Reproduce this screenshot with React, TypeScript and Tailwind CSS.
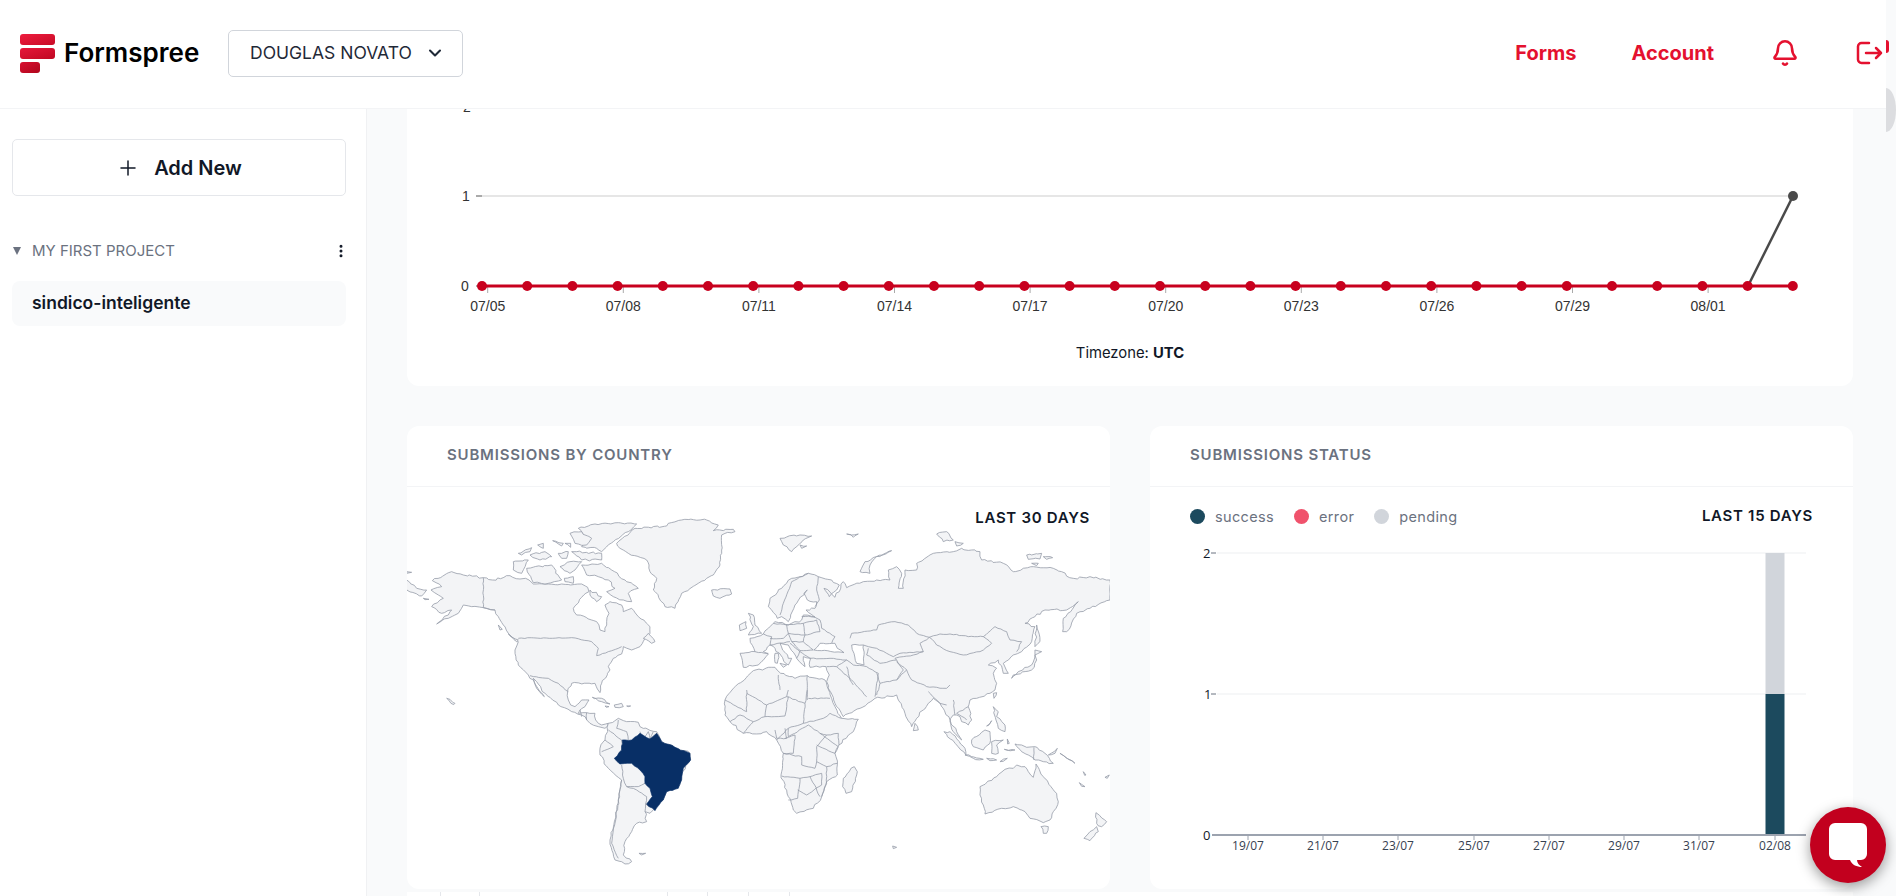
import React from "react";
import { Bell, ChevronDown, MoreVertical, Plus } from "lucide-react";

const frameA: string[] = [
  "82,212 140,185 175,195 235,203 262,210 315,197 345,207 362,205 372,210 385,222 430,222 470,222 497,225 530,222 548,232 552,245 530,262 505,295 515,315 575,335 585,360 600,365 605,335 612,310 600,285 615,275 650,285 655,305 680,295 700,320 735,350 735,370 720,385 705,410 680,420 655,410 650,432 625,445 610,470 615,480 590,520 585,548 570,520 500,520 488,545 490,570 497,585 510,590 530,570 552,570 540,590 525,600 520,610 545,608 570,610 572,630 590,645 610,640 600,655 580,650 555,640 530,615 500,605 460,585 420,550 395,515 385,505 395,535 418,560 405,545 385,510 370,495 340,465 330,420 340,395 310,370 295,345 280,320 270,300 235,293 200,290 175,285 160,310 130,325 95,342 130,315 140,300 110,310 80,290 115,265 100,255 78,240 110,230",
  "530,165 590,160 620,180 660,210 700,235 670,250 680,275 655,270 625,260 605,245 630,235 610,210 580,200 545,195",
  "520,55 570,42 640,38 695,42 670,65 625,95 590,125 575,115 530,110 555,90",
  "495,70 530,65 560,85 545,105 510,100",
  "325,155 370,150 350,190 325,180",
  "365,175 440,165 470,210 420,222 385,218",
  "340,130 380,113 375,125 350,135",
  "375,135 420,125 440,140 405,150",
  "398,105 415,100 415,115",
  "443,92 475,100 470,108",
  "480,100 497,100 497,112",
  "460,130 490,125 485,145 470,145",
  "500,125 515,125 590,130 590,150 530,150",
  "495,155 530,155 510,180 495,190 465,170",
  "478,205 505,200 505,220 480,215",
  "555,240 590,260 575,275 555,255",
  "715,385 730,370 750,395 740,400",
  "310,372 340,390 335,395",
  "280,345 292,358 285,360",
  "5,210 35,235 65,240 50,258 5,240",
  "5,185 20,187 5,190",
  "55,265 72,268 60,269",
  "920,240 975,237 980,252 945,265 925,258",
  "635,100 690,55 785,48 790,40 830,30 905,30 940,45 925,62 985,58 990,65 950,75 950,120 945,165 925,195 880,220 830,250 810,295 780,290 745,240 755,205 735,185 725,150 670,130 645,115",
  "562,562 590,565 615,582 590,575",
  "628,585 650,580 655,590 630,592",
  "665,588 677,588 670,590",
  "600,588 612,590 604,592",
  "125,565 150,580 146,584",
  "610,640 640,625 665,635 700,637 705,650 755,665 770,695 855,730 855,750 830,790 825,825 790,840 750,895 735,910 720,905 725,935 695,940 680,965 660,995 655,1035 680,1055 660,1062 630,1050 615,990 630,940 640,870 650,810 610,775 585,735 585,715 600,690 608,665",
  "702,1030 722,1030 710,1035",
];

const bordersA: string[] = [
  "235,203 235,293 270,300",
  "340,385 500,383 560,395 580,415 575,437 610,425 650,410",
  "375,497 430,505 460,520 490,545",
  "525,600 530,620",
  "545,608 545,630",
  "610,660 650,690 650,720",
  "640,630 635,655 665,665 670,690",
  "705,665 715,685 730,665 735,687 745,665",
  "600,690 625,710 590,725",
  "650,765 655,805",
  "655,805 665,830 700,830 720,820",
  "650,810 640,870 625,960 620,1000 640,1045",
  "665,830 695,840 725,860 722,882 720,905",
  "722,882 745,895",
];

const brazil =
  "652,690 680,690 705,670 735,687 755,670 770,695 810,712 855,730 857,750 835,775 830,810 820,835 785,845 775,870 750,902 725,882 742,860 735,835 720,820 720,800 705,780 680,760 645,762 628,745 650,720";

const frameB: string[] = [
  "15,570 40,535 62,518 100,482 165,472 182,490 225,505 262,497 315,510 335,565 345,590 365,625 415,628 400,665 357,705 345,730 352,765 352,795 320,815 305,860 280,895 230,910 220,900 205,860 183,795 190,730 170,690 140,665 110,672 70,670 30,635 15,615",
  "145,432 115,465 70,472 60,430 105,425 90,385 130,372 165,335 205,345 245,330 250,315 285,322 258,300 285,295 290,275 262,270 252,250 262,240 225,285 205,335 185,320 172,325 145,290 150,265 185,235 215,205 265,190 295,200 335,210 358,225 350,240 328,260 312,235 345,262 370,215 380,233 430,215 470,210 510,210 505,180 530,170 545,190 535,235 550,235 555,180 590,180 590,160 640,130 700,125 725,115 780,125 785,150 850,160 880,185 940,170 1000,175 1060,205 1110,200 1170,210 1170,270 1110,295 1070,310 1040,365 1028,365 1030,325 1075,275 1040,300 975,300 915,340 945,350 935,395 905,425 880,435 850,460 865,490 850,490 835,450 805,465 830,475 820,490 830,520 825,540 810,550 770,565 750,570 745,590 755,630 745,645 725,635 720,620 700,615 690,635 710,665 725,690 700,665 690,630 660,580 640,565 625,580 590,625 575,650 555,610 530,555 465,565 420,595 370,620 345,580 320,515 328,495 318,470 270,472 272,445 250,440 255,470 230,445 205,405 180,400 205,445 215,445 205,465 165,415 150,405 130,425",
  "180,460 200,465 190,472",
  "165,430 175,430 172,460 165,458",
  "85,310 100,315 105,345 125,370 85,375 100,350",
  "58,345 78,335 80,355 60,362",
  "180,85 240,75 275,78 250,90 215,125 190,105",
  "240,105 260,108 245,115",
  "380,72 415,72 400,82",
  "420,185 435,155 515,122 470,140 450,165 450,190",
  "650,72 680,65 700,90 670,95",
  "705,95 730,100 710,108",
  "920,135 965,130 960,147 925,148",
  "970,140 998,143 980,148",
  "935,160 955,160 950,167",
  "950,345 960,395 945,410",
  "945,420 965,425 945,435",
  "875,505 895,485 935,465 945,435 950,450 935,480 880,495",
];

const holes: string[] = [
  "282,420 300,400 345,400 352,415 372,428 305,422",
  "395,405 430,405 432,465 410,460 402,430",
];

const bordersB: string[] = [
  "295,200 290,240 298,270 285,290",
  "265,190 215,215 190,280 180,315",
  "285,322 300,330 305,355 345,380 335,400",
  "390,385 395,370 470,360 475,345 525,335 565,345 590,370 628,382 660,372 690,372 745,380 790,380 825,350 860,365 870,390 905,395 890,425",
  "628,382 650,405 690,425 730,435 780,425 815,400 790,380",
  "628,382 600,400 610,425 540,430 520,440 500,430 470,415 445,410 430,405",
  "610,425 580,435 550,440 525,445 535,460 560,480 575,510 620,530 680,535 690,525",
  "445,415 440,435 480,460 530,450",
  "380,450 400,465 440,470 475,490 470,520 465,560",
  "470,490 480,520 530,510 550,480 530,455",
  "400,525 390,510 380,470",
  "480,520 470,555",
  "530,510 560,480",
  "105,425 145,430",
  "130,372 155,380 150,405",
  "160,340 200,345 205,370 190,385 150,385",
  "200,345 250,340 255,375 205,370",
  "255,375 300,365",
  "250,340 290,330 300,365",
  "205,370 215,395 250,395 280,420",
  "250,395 255,375",
  "215,395 240,422 280,420",
  "150,405 210,395",
  "210,400 240,425 270,445",
  "240,422 230,445",
  "245,320 285,320",
  "320,470 350,470 380,450",
  "350,470 395,510 440,560",
  "270,445 330,445 380,450",
  "175,495 180,540",
  "262,497 262,570",
];

const frameC: string[] = [
  "370,265 403,230 412,245 395,305 378,310 368,290",
  "585,100 595,120 580,122",
  "820,10 830,8 822,25",
  "672,125 690,125 735,175 738,195 710,165",
  "735,195 790,208 760,205",
  "755,150 795,120 810,125 810,160 790,180 760,170",
  "815,155 850,150 830,165 835,190 815,190",
  "820,50 835,65 830,80 855,105 855,125 835,115 828,90",
  "800,108 815,92 806,106",
  "885,162 905,165 920,172 945,170 975,190 1000,220 970,215 945,210 925,195 905,185",
  "800,205 830,210 810,212",
  "840,215 862,205 850,214",
  "853,178 885,180 865,181",
  "985,195 1012,175 1005,190",
  "1020,190 1065,220 1040,205",
  "1090,245 1098,255 1094,256",
  "1078,278 1095,290 1085,289",
  "1155,262 1168,255 1162,265",
  "862,147 868,160 863,162",
  "518,468 530,472 520,476",
  "780,290 830,260 855,238 880,235 890,225 915,230 925,245 940,262 948,222 970,260 1010,310 1015,335 990,390 970,398 930,385 915,365 880,350 845,355 795,372 790,345 780,315",
  "963,410 985,410 980,430 970,430",
  "1128,368 1160,395 1145,410 1130,400",
  "1130,410 1135,425 1110,452 1092,445 1110,425",
];

const bordersC: string[] = [
  "15,30 80,65 80,0",
  "80,10 140,45 200,20 205,0",
  "140,45 135,80 100,95 70,130",
  "30,95 60,75 100,95",
  "135,80 195,78 205,20",
  "200,20 255,40 250,100 205,115",
  "255,40 262,0",
  "265,25 330,25",
  "250,100 310,85 330,70 365,85",
  "205,115 170,150",
  "165,120 170,145 200,145 195,115",
  "205,115 205,140 265,105 300,130 320,135 290,170 290,215",
  "195,145 225,135 220,190 190,190",
  "300,130 355,170 345,190",
  "320,135 355,130 357,165",
  "290,165 345,190",
  "290,215 320,230 352,220",
  "190,190 245,200 245,225 285,235 290,215",
  "185,258 240,265 270,260 305,250",
  "240,265 233,325 205,330",
  "233,300 260,315 305,285 305,250",
  "320,230 320,280 305,320",
  "270,260 300,320",
  "625,5 660,40 680,45",
  "700,30 705,75",
  "745,50 710,70 740,90",
  "942,172 942,210",
];

// Breaks each long straight edge into short wobbling segments, so traced outlines read as coastlines.
function wobble(points: string, amp: number, closed: boolean): string {
  const pts = points.split(" ").map((p) => p.split(",").map(Number));
  const out: string[] = [];
  const count = closed ? pts.length : pts.length - 1;
  for (let i = 0; i < count; i++) {
    const [x1, y1] = pts[i];
    const [x2, y2] = pts[(i + 1) % pts.length];
    out.push(`${x1},${y1}`);
    const len = Math.hypot(x2 - x1, y2 - y1);
    const steps = Math.floor(len / 9);
    if (steps < 2) continue;
    for (let s = 1; s < steps; s++) {
      const t = s / steps;
      const seed = Math.sin((x1 + s * 7.3) * 12.9898 + (y1 - s * 3.1) * 78.233) * 43758.5453;
      const r = seed - Math.floor(seed) - 0.5;
      const seed2 = Math.sin((y2 + s * 5.7) * 39.346 + (x2 + s) * 11.135) * 24634.6345;
      const r2 = seed2 - Math.floor(seed2) - 0.5;
      out.push(`${(x1 + (x2 - x1) * t + r * amp * 2).toFixed(1)},${(y1 + (y2 - y1) * t + r2 * amp * 2).toFixed(1)}`);
    }
  }
  if (!closed) out.push(`${pts[pts.length - 1][0]},${pts[pts.length - 1][1]}`);
  return out.join(" ");
}

const chartX = Array.from({ length: 30 }, (_, i) => 482 + i * 45.2);
const dates = ["07/05", "07/08", "07/11", "07/14", "07/17", "07/20", "07/23", "07/26", "07/29", "08/01"];
const barTicks: [string, number][] = [
  ["19/07", 1248],
  ["21/07", 1323],
  ["23/07", 1398],
  ["25/07", 1474],
  ["27/07", 1549],
  ["29/07", 1624],
  ["31/07", 1699],
  ["02/08", 1775],
];

function Land({ items, lines, tx, ty }: { items: string[]; lines: string[]; tx: number; ty: number }) {
  return (
    <g transform={`translate(${tx} ${ty}) scale(0.3333)`}>
      {items.map((p, i) => (
        <polygon key={i} points={wobble(p, 3, true)} fill="#f3f4f6" stroke="#969ca8" strokeWidth="0.8" vectorEffect="non-scaling-stroke" strokeLinejoin="round" />
      ))}
      {lines.map((p, i) => (
        <polyline key={i} points={wobble(p, 1.5, false)} fill="none" stroke="#969ca8" strokeWidth="0.8" vectorEffect="non-scaling-stroke" strokeLinejoin="round" />
      ))}
    </g>
  );
}

function WorldMap() {
  return (
    <svg viewBox="407 487 703 402" className="block h-[402px] w-[703px]">
      <Land items={frameA} lines={bordersA} tx={405} ty={510} />
      <Land items={frameB} lines={bordersB} tx={720} ty={510} />
      <g transform="translate(720 510) scale(0.3333)">
        {holes.map((p, i) => (
          <polygon key={i} points={wobble(p, 2, true)} fill="#ffffff" stroke="#969ca8" strokeWidth="0.8" vectorEffect="non-scaling-stroke" />
        ))}
      </g>
      <Land items={frameC} lines={bordersC} tx={720} ty={690} />
      <g transform="translate(405 510) scale(0.3333)">
        <polygon points={wobble(brazil, 2, true)} fill="#082f66" stroke="#082f66" strokeWidth="2" />
      </g>
    </svg>
  );
}

function LineChart() {
  return (
    <svg viewBox="407 109 1446 277" className="block h-[277px] w-[1446px] font-['Liberation_Sans',sans-serif]">
      <text x="463" y="112" fontSize="14" fill="#333333">2</text>
      <text x="462" y="201" fontSize="14" fill="#333333">1</text>
      <text x="461" y="291" fontSize="14" fill="#333333">0</text>
      <line x1="476" y1="196" x2="482" y2="196" stroke="#aaaaaa" strokeWidth="2" />
      <line x1="476" y1="286" x2="482" y2="286" stroke="#aaaaaa" strokeWidth="2" />
      <line x1="482" y1="196" x2="1793" y2="196" stroke="#e6e6e6" strokeWidth="2" />
      {dates.map((d, i) => (
        <g key={d}>
          <line x1={487.7 + i * 135.6} y1="286" x2={487.7 + i * 135.6} y2="293" stroke="#aaaaaa" strokeWidth="1" />
          <text x={487.7 + i * 135.6} y="311" fontSize="14" fill="#333333" textAnchor="middle">{d}</text>
        </g>
      ))}
      <polyline points="1748,286 1793,196" fill="none" stroke="#4a4a4a" strokeWidth="2.5" />
      <circle cx="1793" cy="196" r="5" fill="#4a4a4a" />
      <line x1="482" y1="286" x2="1793" y2="286" stroke="#c8001e" strokeWidth="3" />
      {chartX.map((x) => (
        <circle key={x} cx={x} cy="286" r="5" fill="#c8001e" />
      ))}
      <text x="1130" y="358" fontSize="14.8" fill="#111827" textAnchor="middle" className="font-['Inter',sans-serif]">
        Timezone: <tspan fontWeight="700">UTC</tspan>
      </text>
    </svg>
  );
}

function BarChart() {
  return (
    <svg viewBox="1150 540 703 349" className="block h-[349px] w-[703px] font-['Open_Sans',sans-serif]">
      <line x1="1217" y1="553" x2="1806" y2="553" stroke="#f3f4f6" strokeWidth="1.5" />
      <line x1="1217" y1="694" x2="1806" y2="694" stroke="#f3f4f6" strokeWidth="1.5" />
      <text x="1203" y="558" fontSize="13" fill="#111827">2</text>
      <line x1="1211" y1="553" x2="1216" y2="553" stroke="#6b7280" />
      <text x="1204" y="699" fontSize="13" fill="#111827">1</text>
      <line x1="1211" y1="694" x2="1216" y2="694" stroke="#6b7280" />
      <text x="1203" y="840" fontSize="13" fill="#111827">0</text>
      <rect x="1765.5" y="553" width="19" height="141" fill="#d1d5db" />
      <rect x="1765.5" y="694" width="19" height="141" fill="#1c4a5e" />
      <line x1="1212" y1="835" x2="1806" y2="835" stroke="#9ca3af" strokeWidth="2" />
      {barTicks.map(([label, x]) => (
        <g key={label}>
          <line x1={x} y1="835" x2={x} y2="840" stroke="#9ca3af" />
          <text x={x} y="850" fontSize="12" fill="#374151" textAnchor="middle">{label}</text>
        </g>
      ))}
    </svg>
  );
}

function Logo() {
  return (
    <div className="flex w-[180px] items-center gap-[9px]">
      <div className="flex w-[35px] flex-col gap-[3px]">
        <div className="h-[11px] w-[35px] rounded-[3px] bg-gradient-to-br from-[#ee1c3e] to-[#c80a26]" />
        <div className="h-[11px] w-[35px] rounded-[3px] bg-gradient-to-br from-[#e6163a] to-[#c00822]" />
        <div className="h-[11px] w-[20px] rounded-[3px] bg-gradient-to-br from-[#d81030] to-[#b0061c]" />
      </div>
      <span className="text-[26px] leading-none font-semibold text-black">Formspree</span>
    </div>
  );
}

function Header() {
  return (
    <header className="relative flex h-[109px] w-[1886px] shrink-0 items-center border-b border-[#f3f4f6] bg-white pb-[2px]">
      <div className="ml-[20px] flex items-center">
        <Logo />
        <button className="ml-[28px] flex h-[47px] w-[235px] items-center rounded-[5px] border border-[#d1d5db] bg-white pl-[21px] text-[17.5px] text-[#1f2937]">
          <span>DOUGLAS NOVATO</span>
          <ChevronDown className="ml-[13px] h-[20px] w-[20px]" strokeWidth={2.5} />
        </button>
      </div>
      <nav className="ml-auto flex items-center text-[20px] font-bold text-[#e4112f]">
        <a className="mr-[55px]">Forms</a>
        <a className="mr-[57px]">Account</a>
        <Bell className="mr-[57px] h-[28px] w-[28px]" strokeWidth={2.2} />
        <svg viewBox="0 0 28 24" className="mr-[2px] h-[24px] w-[28px]" fill="none" stroke="currentColor" strokeWidth="2.5" strokeLinecap="round" strokeLinejoin="round">
          <path d="M13 2H5.5A3.5 3.5 0 0 0 2 5.5v13A3.5 3.5 0 0 0 5.5 22H13" />
          <path d="M10 12h15M20 7l5 5-5 5" />
        </svg>
      </nav>
      <div className="absolute top-[40px] left-[1886px] h-[13px] w-[3px] rounded-r-full bg-[#e4112f]" />
    </header>
  );
}

function Sidebar() {
  return (
    <aside className="flex w-[367px] shrink-0 flex-col border-r border-[#f0f1f3] bg-white px-[12px] pt-[30px]">
      <button className="flex h-[57px] w-[334px] items-center justify-center rounded-[5px] border border-[#e5e7eb] text-[20px] font-semibold text-[#111827]">
        <Plus className="mr-[14px] h-[24px] w-[24px]" strokeWidth={1.5} />
        Add New
      </button>
      <div className="mt-[43px] flex h-[24px] w-[334px] items-center text-[15px] text-[#6b7280]">
        <span className="mr-[11px] ml-[1px] h-0 w-0 border-x-[4px] border-t-[8px] border-x-transparent border-t-[#6b7280]" />
        <span>MY FIRST PROJECT</span>
        <MoreVertical className="mr-[-3px] ml-auto h-[16px] w-[16px] text-[#111827]" strokeWidth={2.5} />
      </div>
      <div className="mt-[18px] flex h-[45px] w-[334px] items-center rounded-[8px] bg-[#f9fafb] pl-[20px] text-[17.5px] font-semibold text-[#111827]">
        sindico-inteligente
      </div>
    </aside>
  );
}

function Dot({ color, label }: { color: string; label: string }) {
  return (
    <div className="mr-[20px] flex items-center gap-[10px]">
      <span className={`h-[15px] w-[15px] rounded-full ${color}`} />
      <span className="text-[14.5px] tracking-[0.35px] text-[#6b7280]">{label}</span>
    </div>
  );
}

function CardHead({ title }: { title: string }) {
  return (
    <div className="flex h-[61px] items-center border-b border-[#f3f4f6] px-[40px] pb-[1px] text-[15px] font-semibold tracking-[0.8px] text-[#6b7280]">
      {title}
    </div>
  );
}

export default function App() {
  return (
    <div className="relative flex h-[896px] w-[1896px] flex-col overflow-hidden bg-[#f9fafb] font-['Inter',sans-serif]">
      <Header />
      <div className="flex min-h-0 flex-1">
        <Sidebar />
        <main className="flex w-[1486px] flex-col pl-[40px]">
          <section className="h-[277px] w-[1446px] shrink-0 overflow-hidden rounded-b-[12px] bg-white">
            <LineChart />
          </section>
          <div className="mt-[40px] flex gap-[40px]">
            <section className="h-[463px] w-[703px] overflow-hidden rounded-[12px] bg-white">
              <CardHead title="SUBMISSIONS BY COUNTRY" />
              <div className="relative">
                <WorldMap />
                <span className="absolute top-[20px] right-[20px] text-[15px] font-semibold tracking-[0.7px] text-[#111827]">LAST 30 DAYS</span>
              </div>
            </section>
            <section className="h-[463px] w-[703px] overflow-hidden rounded-[12px] bg-white">
              <CardHead title="SUBMISSIONS STATUS" />
              <div className="flex h-[53px] items-center px-[40px] pt-[7px] pb-[1px]">
                <Dot color="bg-[#1c4a5e]" label="success" />
                <Dot color="bg-[#f0526c]" label="error" />
                <Dot color="bg-[#d1d5db]" label="pending" />
                <span className="ml-auto text-[15px] font-semibold tracking-[0.7px] text-[#111827]">LAST 15 DAYS</span>
              </div>
              <BarChart />
            </section>
          </div>
          <div className="mt-[3px] flex h-[4px] w-[1446px] bg-white">
            <span className="ml-[33px] w-[40px] border-x border-[#e5e7eb]" />
            <span className="ml-[187px] w-[41px] border-x border-[#e5e7eb]" />
            <span className="w-[41px] border-r border-[#e5e7eb]" />
            <span className="w-[41px] border-r border-[#e5e7eb]" />
          </div>
        </main>
      </div>
      <div className="absolute top-[88px] left-[1886px] h-[44px] w-[10px] bg-[#dcdde0] [border-radius:0_10px_10px_0/0_22px_22px_0]" />
      <button className="absolute top-[807px] left-[1810px] flex h-[76px] w-[76px] items-center justify-center rounded-full bg-[#c2001e] shadow-[0_4px_14px_rgba(0,0,0,0.4)]">
        <svg viewBox="0 0 40 46" className="h-[46px] w-[40px]" fill="#ffffff">
          <path d="M7 1h26a6 6 0 0 1 6 6v25a6 6 0 0 1-6 6h-4c0 3 2 5 5 7-5 0-10-2-12-7H7a6 6 0 0 1-6-6V7a6 6 0 0 1 6-6z" />
        </svg>
      </button>
    </div>
  );
}
